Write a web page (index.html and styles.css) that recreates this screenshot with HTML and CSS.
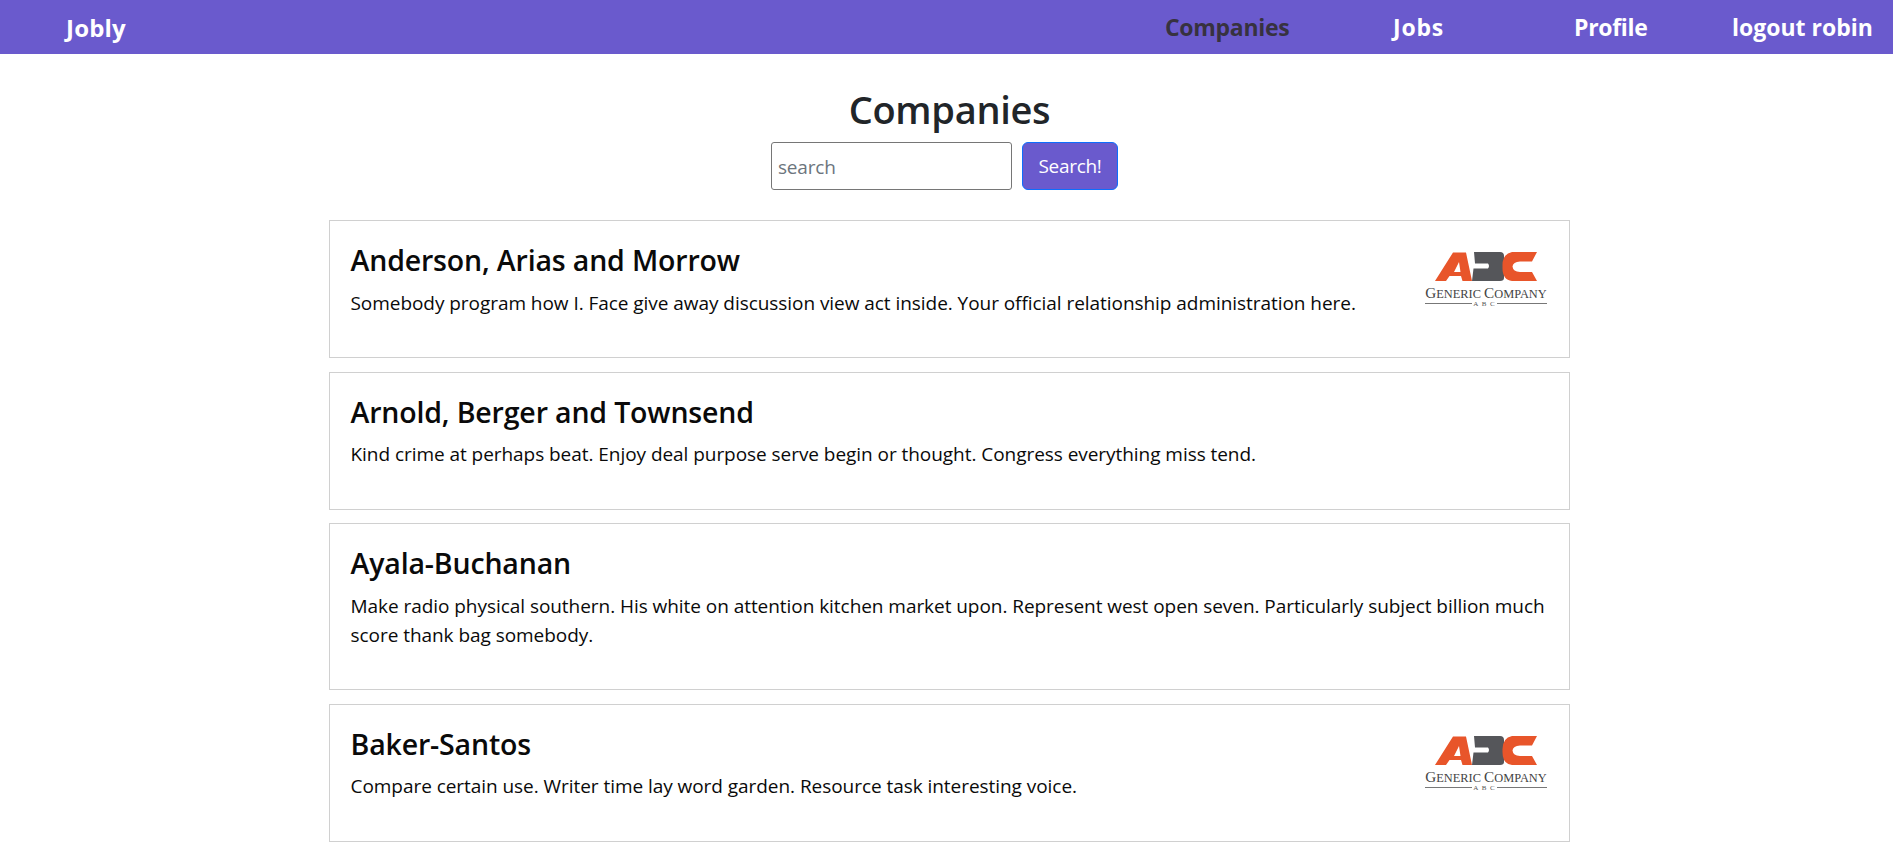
FILE: index.html
```html
<!DOCTYPE html>
<html lang="en">
<head>
<meta charset="utf-8">
<title>Jobly</title>
<link rel="stylesheet" href="styles.css">
</head>
<body>
<nav class="navbar">
  <a class="brand" href="#">Jobly</a>
  <div class="nav-links">
    <a class="nav-link active companies" href="#">Companies</a>
    <a class="nav-link jobs" href="#">Jobs</a>
    <a class="nav-link profile" href="#">Profile</a>
    <a class="nav-link logout" href="#">logout robin</a>
  </div>
</nav>
<main class="page">
  <h1 class="title">Companies</h1>
  <form class="search">
    <input class="search-input" type="text" placeholder="search">
    <button class="search-btn" type="button">Search!</button>
  </form>
  <section class="list">
    <article class="card">
      <svg class="logo" viewBox="0 0 125 70" aria-hidden="true">
        <use href="#abc"></use>
        <text class="logo-name" x="62" y="49.5"><tspan>G</tspan><tspan class="sc">ENERIC </tspan><tspan>C</tspan><tspan class="sc">OMPANY</tspan></text>
        <path class="logo-rule" d="M1 55.5H48M73 55.5H123"/>
        <text class="logo-sub" x="60.5" y="57.8">A B C</text>
      </svg>
      <h2 class="name">Anderson, Arias and Morrow</h2>
      <p class="desc">Somebody program how I. Face give away discussion view act inside. Your official relationship administration here.</p>
    </article>
    <article class="card">
      <h2 class="name">Arnold, Berger and Townsend</h2>
      <p class="desc">Kind crime at perhaps beat. Enjoy deal purpose serve begin or thought. Congress everything miss tend.</p>
    </article>
    <article class="card">
      <h2 class="name">Ayala-Buchanan</h2>
      <p class="desc">Make radio physical southern. His white on attention kitchen market upon. Represent west open seven. Particularly subject billion much score thank bag somebody.</p>
    </article>
    <article class="card">
      <svg class="logo" viewBox="0 0 125 70" aria-hidden="true">
        <use href="#abc"></use>
        <text class="logo-name" x="62" y="49.5"><tspan>G</tspan><tspan class="sc">ENERIC </tspan><tspan>C</tspan><tspan class="sc">OMPANY</tspan></text>
        <path class="logo-rule" d="M1 55.5H48M73 55.5H123"/>
        <text class="logo-sub" x="60.5" y="57.8">A B C</text>
      </svg>
      <h2 class="name">Baker-Santos</h2>
      <p class="desc">Compare certain use. Writer time lay word garden. Resource task interesting voice.</p>
    </article>
  </section>
</main>
<svg class="defs" width="0" height="0" aria-hidden="true">
  <defs>
    <g id="abc">
      <path class="o" fill-rule="evenodd" d="M11 33 29 4.500H42L48 33H38.500L37 28H25.500L22 33ZM30 24H36.500L35 14Z"/>
      <path class="g" d="M50 4H76Q80 4 80 8V30Q80 33 76 33H48L49.500 20.500H64Q66 18 64 15.500H51Z"/>
      <path class="o" d="M113 4 108 13.500H96Q89 14 88.500 18.500Q89 23.500 96 24H108L113 33H88Q78 32 78.500 18.500Q78 6 88 4Z"/>
    </g>
  </defs>
</svg>
</body>
</html>
```
FILE: styles.css
```css
* { box-sizing: border-box; }
html, body { margin: 0; padding: 0; }
body {
  background: #fff;
  color: #212529;
  font-family: "Open Sans", "Noto Sans", sans-serif;
  font-size: 19px;
  height: 852px;
  overflow: hidden;
}
.defs { position: absolute; }
.navbar {
  height: 54px;
  background: #6a5acd;
  display: flex;
  align-items: center;
  justify-content: space-between;
  font-size: 23px;
  font-weight: 700;
}
.navbar a { text-decoration: none; color: #fff; }
.brand { margin-left: 66px; font-size: 24px; letter-spacing: 0.2px; }
.nav-links { display: flex; margin-right: 18px; }
.navbar .nav-link.active { color: #37323f; }
.companies { width: 228px; letter-spacing: -0.3px; }
.jobs { width: 181px; letter-spacing: 0.8px; }
.profile { width: 158px; letter-spacing: -0.3px; }
.logout { width: 143px; white-space: nowrap; }
.page { display: flex; flex-direction: column; align-items: center; padding-left: 6px; }
.title {
  margin: 33px 0 0;
  font-size: 38px;
  font-weight: 600;
  line-height: 45px;
  letter-spacing: -0.3px;
}
.search { display: flex; gap: 10px; margin: 10px 10px 0 0; }
.search-input {
  width: 241px;
  height: 48px;
  border: 1px solid #767676;
  border-radius: 3px;
  padding: 1px 6px 0;
  font: inherit;
  letter-spacing: -0.2px;
}
.search-input::placeholder { color: #6c757d; opacity: 1; }
.search-btn {
  width: 96px;
  height: 48px;
  background: #6a5acd;
  border: 1px solid #0d6efd;
  border-radius: 6px;
  color: #fff;
  font: inherit;
  letter-spacing: -0.3px;
}
.list {
  width: 1241px;
  margin-top: 30px;
  display: flex;
  flex-direction: column;
  gap: 13.7px;
}
.card {
  border: 1px solid #d0d0d0;
  padding: 22px 18px 39.2px 20.5px;
  color: #0a0a0a;
}
.logo { float: right; width: 125px; height: 70px; margin: 5px 2px 0 16px; }
.o { fill: #e8552a; }
.g { fill: #55565a; }
.logo-name { font-family: "Liberation Serif", serif; font-size: 15.2px; text-anchor: middle; fill: #444; }
.logo-name .sc { font-size: 12.4px; }
.logo-rule { stroke: #777; stroke-width: 1; fill: none; }
.logo-sub { font-family: "Liberation Serif", serif; font-size: 7px; letter-spacing: 1px; text-anchor: middle; fill: #555; }
.name {
  margin: 0 0 11.5px;
  font-size: 28.5px;
  font-weight: 600;
  line-height: 34px;
  letter-spacing: -0.16px;
}
.desc { margin: 0; line-height: 29px; letter-spacing: -0.05px; }
```
